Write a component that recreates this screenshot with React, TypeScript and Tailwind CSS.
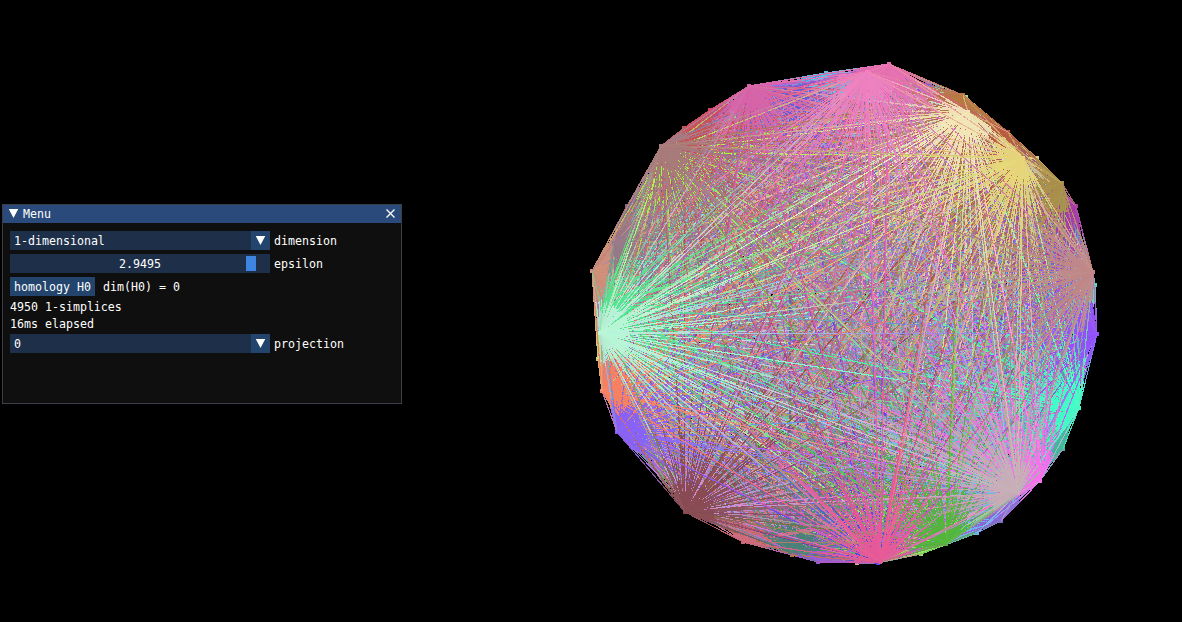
import { memo, type ReactNode } from "react";

type Vertex = { x: number; y: number; z: number; c: number };

// Rim vertices as [x, y, colour], ordered from the farthest to the nearest.
const NAMED: [number, number, number][] = [
  [857, 563, 0xe8a880], [1095, 285, 0x60d8c0], [598, 359, 0xc8d870], [966, 97, 0xa8d890],
  [826, 73, 0x50c8e8], [600, 303, 0x50d8e8], [1037, 158, 0xd8c898], [627, 206, 0x806880],
  [710, 110, 0xd84060], [1064, 200, 0x4070ff], [792, 555, 0xb87840], [977, 533, 0x68b8f8],
  [921, 554, 0x90e860], [1001, 521, 0x8868d8], [1063, 449, 0x40b898], [818, 562, 0x9858d8],
  [790, 87, 0x6a5ad8], [878, 563, 0x4848e8], [743, 542, 0xd06878], [790, 552, 0x488078],
  [1076, 206, 0xa838a8], [592, 271, 0xd08f78], [690, 508, 0xc890d0], [664, 152, 0xa0f840],
  [1097, 334, 0x9050ff], [684, 128, 0xc85055], [614, 243, 0x957a88], [1079, 408, 0x40ffc8],
  [1062, 183, 0xa89048], [1008, 132, 0xb85a40], [963, 95, 0xb87840], [685, 512, 0x884850],
  [1012, 499, 0x80b8e0], [617, 432, 0x8860f8], [602, 391, 0xf88060], [749, 86, 0xd862a8],
  [1040, 481, 0xf870f0], [946, 544, 0x50b838], [661, 146, 0xa87a78], [889, 64, 0xe870b0],
  [602, 309, 0x50e890], [968, 112, 0xf4e8b8], [1093, 272, 0xc08888], [1023, 158, 0xe8d878],
  [1018, 493, 0xc8b0b8], [867, 72, 0xf080c0], [600, 333, 0xb8f8d8], [880, 562, 0xe85898],
];
const COUNT = 100;

const hex = (c: number) => "#" + c.toString(16).padStart(6, "0");

function mix(a: number, b: number, t: number) {
  const ch = (s: number) => Math.round(((a >> s) & 255) * (1 - t) + ((b >> s) & 255) * t);
  return (ch(16) << 16) | (ch(8) << 8) | ch(0);
}

function random(seed: number) {
  let s = seed;
  return () => {
    s = (s + 0x6d2b79f5) | 0;
    let t = Math.imul(s ^ (s >>> 15), 1 | s);
    t = (t + Math.imul(t ^ (t >>> 7), 61 | t)) ^ t;
    return ((t ^ (t >>> 14)) >>> 0) / 4294967296;
  };
}

// The remaining vertices sit behind the rim, just inside it.
function buildVertices(): Vertex[] {
  const rnd = random(41);
  const cx = 846, cy = 315;
  const ring = NAMED.map(([x, y]) => ({ x, y, a: Math.atan2(y - cy, x - cx) })).sort((p, q) => p.a - q.a);
  const channel = () => Math.floor(75 + rnd() * 180);
  const rest = COUNT - NAMED.length;
  const filler: Vertex[] = [];
  for (let k = 0; k < rest; k++) {
    const a = -Math.PI + ((k + rnd()) / rest) * 2 * Math.PI;
    const i = Math.max(0, ring.findIndex((p) => p.a > a));
    const p = ring[(i + ring.length - 1) % ring.length], q = ring[i];
    const t = rnd(), inset = 0.97 + rnd() * 0.018;
    filler.push({
      x: Math.round(cx + (p.x + (q.x - p.x) * t - cx) * inset),
      y: Math.round(cy + (p.y + (q.y - p.y) * t - cy) * inset),
      z: rnd() * 0.8 - 1,
      c: (channel() << 16) | (channel() << 8) | channel(),
    });
  }
  return [...filler, ...NAMED.map(([x, y, c], k) => ({ x, y, c, z: -0.1 + (1.1 * k) / (NAMED.length - 1) }))];
}

const VERTICES = buildVertices();

// Edges are cut into short pieces; everything is painted back to front.
function buildPieces() {
  const pieces: { d: string; z: number; c: string; dot?: boolean }[] = [];
  VERTICES.forEach((b, j) => {
    pieces.push({ d: `M${b.x - 2} ${b.y}h4`, z: b.z, c: hex(b.c), dot: true });
    VERTICES.slice(0, j).forEach((a) => {
      const n = Math.max(1, Math.round(Math.hypot(b.x - a.x, b.y - a.y) / 30));
      const at = (t: number) => `${(a.x + (b.x - a.x) * t).toFixed(1)} ${(a.y + (b.y - a.y) * t).toFixed(1)}`;
      for (let k = 0; k < n; k++) {
        const m = (k + 0.5) / n;
        pieces.push({ d: `M${at(k / n)}L${at((k + 1) / n)}`, z: a.z + (b.z - a.z) * m, c: hex(mix(a.c, b.c, m)) });
      }
    });
  });
  return pieces.sort((p, q) => p.z - q.z);
}

const PIECES = buildPieces();

const Complex = memo(function Complex() {
  return (
    <svg className="block h-[622px] w-[602px] shrink-0" viewBox="580 0 602 622" shapeRendering="crispEdges">
      <g strokeWidth="1.15">
        {PIECES.map((p, i) => (
          <path key={i} d={p.d} stroke={p.c} strokeWidth={p.dot ? 4 : undefined} />
        ))}
      </g>
    </svg>
  );
});

function Triangle() {
  return (
    <svg className="h-[9px] w-[9px]" viewBox="0 0 9 9">
      <path d="M-.3 0h9.600L4.500 9z" fill="#fff" />
    </svg>
  );
}

function Row({ label, children }: { label: string; children: ReactNode }) {
  return (
    <div className="flex h-[19px] items-center gap-1">
      <div className="flex h-[19px] w-[260px] bg-[#1d2f49]">{children}</div>
      <span className="pt-px">{label}</span>
    </div>
  );
}

function Combo({ label, value }: { label: string; value: string }) {
  return (
    <Row label={label}>
      <span className="flex-1 pt-px pl-1 leading-[19px]">{value}</span>
      <button className="flex w-[19px] items-center justify-center bg-[#23456d]" aria-label={label}>
        <Triangle />
      </button>
    </Row>
  );
}

export default function App() {
  return (
    <div className="flex h-[622px] w-[1182px] justify-between overflow-hidden bg-black">
      <section className="mt-[204px] ml-[2px] flex h-[200px] w-[400px] shrink-0 flex-col border border-[#3e3e47] bg-[#0f0f0f] font-['DejaVu_Sans_Mono',monospace] text-[11.627px] leading-[13px] whitespace-pre text-white">
        <header className="flex h-[18px] items-center bg-[#294a7a] pr-[6px] pb-px pl-[6px]">
          <Triangle />
          <span className="ml-[5px] flex-1 pt-px">Menu</span>
          <svg className="h-[9px] w-[9px]" viewBox="0 0 9 9">
            <path d="M.5.5l8 8M8.500.5l-8 8" stroke="#fff" strokeWidth="1.3" />
          </svg>
        </header>
        <div className="flex flex-col gap-1 px-[7px] pt-2">
          <Combo label="dimension" value="1-dimensional" />
          <Row label="epsilon">
            <div className="flex flex-1 items-center pl-[109px]">
              <span className="w-[127px] pt-px">2.9495</span>
              <span className="h-[15px] w-[10px] bg-[#3d85e0]" />
            </div>
          </Row>
          <div className="flex h-[19px] items-center gap-2">
            <button className="h-[19px] w-[85px] bg-[#23456d] pt-px text-center">homology H0</button>
            <span className="pt-px">dim(H0) = 0</span>
          </div>
          <p className="h-[13px] pt-px">4950 1-simplices</p>
          <p className="h-[13px] pt-px">16ms elapsed</p>
          <Combo label="projection" value="0" />
        </div>
      </section>
      <Complex />
    </div>
  );
}
